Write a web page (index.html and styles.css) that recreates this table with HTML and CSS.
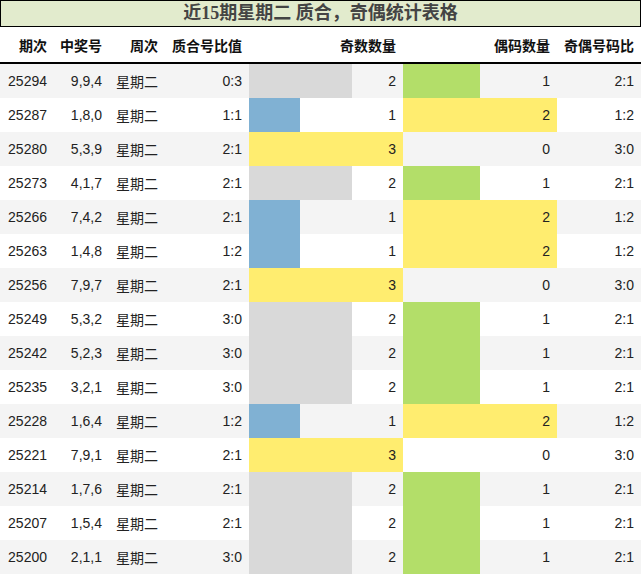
FILE: index.html
```html
<!DOCTYPE html>
<html lang="zh">
<head>
<meta charset="utf-8">
<title>近15期星期二 质合，奇偶统计表格</title>
<link rel="stylesheet" href="styles.css">
</head>
<body>
<div class="sheet">
  <div class="title">近15期星期二 质合，奇偶统计表格</div>
  <table class="stats">
    <colgroup>
      <col class="c-issue"><col class="c-num"><col class="c-week"><col class="c-ratio">
      <col class="c-bar"><col class="c-bar"><col class="c-ratio2">
    </colgroup>
    <thead>
      <tr><th>期次</th><th>中奖号</th><th>周次</th><th>质合号比值</th><th>奇数数量</th><th>偶码数量</th><th>奇偶号码比</th></tr>
    </thead>
    <tbody>
      <tr><td>25294</td><td>9,9,4</td><td>星期二</td><td>0:3</td><td class="bar"><i class="fill gray" style="width:103px"></i><span>2</span></td><td class="bar"><i class="fill green" style="width:77px"></i><span>1</span></td><td>2:1</td></tr>
      <tr><td>25287</td><td>1,8,0</td><td>星期二</td><td>1:1</td><td class="bar"><i class="fill blue" style="width:51px"></i><span>1</span></td><td class="bar"><i class="fill yellow" style="width:154px"></i><span>2</span></td><td>1:2</td></tr>
      <tr><td>25280</td><td>5,3,9</td><td>星期二</td><td>2:1</td><td class="bar"><i class="fill yellow" style="width:154px"></i><span>3</span></td><td class="bar"><span>0</span></td><td>3:0</td></tr>
      <tr><td>25273</td><td>4,1,7</td><td>星期二</td><td>2:1</td><td class="bar"><i class="fill gray" style="width:103px"></i><span>2</span></td><td class="bar"><i class="fill green" style="width:77px"></i><span>1</span></td><td>2:1</td></tr>
      <tr><td>25266</td><td>7,4,2</td><td>星期二</td><td>2:1</td><td class="bar"><i class="fill blue" style="width:51px"></i><span>1</span></td><td class="bar"><i class="fill yellow" style="width:154px"></i><span>2</span></td><td>1:2</td></tr>
      <tr><td>25263</td><td>1,4,8</td><td>星期二</td><td>1:2</td><td class="bar"><i class="fill blue" style="width:51px"></i><span>1</span></td><td class="bar"><i class="fill yellow" style="width:154px"></i><span>2</span></td><td>1:2</td></tr>
      <tr><td>25256</td><td>7,9,7</td><td>星期二</td><td>2:1</td><td class="bar"><i class="fill yellow" style="width:154px"></i><span>3</span></td><td class="bar"><span>0</span></td><td>3:0</td></tr>
      <tr><td>25249</td><td>5,3,2</td><td>星期二</td><td>3:0</td><td class="bar"><i class="fill gray" style="width:103px"></i><span>2</span></td><td class="bar"><i class="fill green" style="width:77px"></i><span>1</span></td><td>2:1</td></tr>
      <tr><td>25242</td><td>5,2,3</td><td>星期二</td><td>3:0</td><td class="bar"><i class="fill gray" style="width:103px"></i><span>2</span></td><td class="bar"><i class="fill green" style="width:77px"></i><span>1</span></td><td>2:1</td></tr>
      <tr><td>25235</td><td>3,2,1</td><td>星期二</td><td>3:0</td><td class="bar"><i class="fill gray" style="width:103px"></i><span>2</span></td><td class="bar"><i class="fill green" style="width:77px"></i><span>1</span></td><td>2:1</td></tr>
      <tr><td>25228</td><td>1,6,4</td><td>星期二</td><td>1:2</td><td class="bar"><i class="fill blue" style="width:51px"></i><span>1</span></td><td class="bar"><i class="fill yellow" style="width:154px"></i><span>2</span></td><td>1:2</td></tr>
      <tr><td>25221</td><td>7,9,1</td><td>星期二</td><td>2:1</td><td class="bar"><i class="fill yellow" style="width:154px"></i><span>3</span></td><td class="bar"><span>0</span></td><td>3:0</td></tr>
      <tr><td>25214</td><td>1,7,6</td><td>星期二</td><td>2:1</td><td class="bar"><i class="fill gray" style="width:103px"></i><span>2</span></td><td class="bar"><i class="fill green" style="width:77px"></i><span>1</span></td><td>2:1</td></tr>
      <tr><td>25207</td><td>1,5,4</td><td>星期二</td><td>2:1</td><td class="bar"><i class="fill gray" style="width:103px"></i><span>2</span></td><td class="bar"><i class="fill green" style="width:77px"></i><span>1</span></td><td>2:1</td></tr>
      <tr><td>25200</td><td>2,1,1</td><td>星期二</td><td>3:0</td><td class="bar"><i class="fill gray" style="width:103px"></i><span>2</span></td><td class="bar"><i class="fill green" style="width:77px"></i><span>1</span></td><td>2:1</td></tr>
    </tbody>
  </table>
</div>
</body>
</html>
```
FILE: styles.css
```css
html, body {
  margin: 0;
  padding: 0;
  background: #fff;
}

.sheet {
  width: 641px;
  font-family: "Liberation Sans", "Noto Sans CJK SC", sans-serif;
  font-size: 14px;
  color: #222;
}

.title {
  box-sizing: border-box;
  height: 27px;
  border: 1px solid #000;
  background: #e2ebcd;
  color: #444;
  font-family: "Liberation Serif", "Noto Sans CJK SC", serif;
  font-weight: bold;
  font-size: 18px;
  line-height: 25px;
  text-align: center;
}

.stats {
  width: 641px;
  table-layout: fixed;
  border-collapse: collapse;
  border-spacing: 0;
}

.c-issue { width: 54px; }
.c-num { width: 55px; }
.c-week { width: 56px; }
.c-ratio { width: 84px; }
.c-bar { width: 154px; }
.c-ratio2 { width: 84px; }

.stats th,
.stats td {
  padding: 0 7px 0 0;
  text-align: right;
  vertical-align: middle;
  white-space: nowrap;
}

.stats th {
  height: 35px;
  border-bottom: 2px solid #000;
  font-weight: bold;
  color: #111;
}

.stats td {
  height: 34px;
  color: #222;
}

.stats tbody tr:nth-child(odd) {
  background: #f4f4f4;
}

.stats td.bar {
  position: relative;
}

.fill {
  position: absolute;
  left: 0;
  top: 0;
  bottom: 0;
}

.bar span {
  position: relative;
}

.gray { background: #d9d9d9; }
.blue { background: #80b1d3; }
.yellow { background: #ffed6f; }
.green { background: #b3de69; }
```
